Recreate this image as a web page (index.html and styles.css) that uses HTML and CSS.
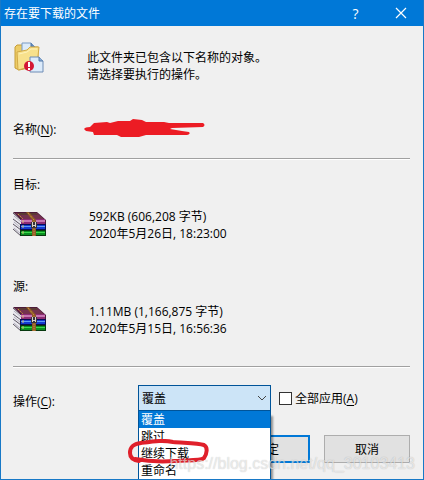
FILE: index.html
```
<!DOCTYPE html>
<html lang="zh-CN">
  <head>
    <meta charset="UTF-8" />
    <meta name="viewport" content="width=device-width, initial-scale=1.0" />
    <title>存在要下载的文件</title>
    <link rel="stylesheet" href="styles.css">
  </head>
  <body>
    <!-- shared archive icon -->
    <svg class="sprite" aria-hidden="true">
      <symbol id="archive" viewBox="0 0 33 25">
        <!-- page edges -->
        <path d="M0 1 L8 8 V24 L0 17 Z" fill="#e9e8ee" />
        <path d="M1 4 L8 10 M1 10 L8 16 M1 16 L8 22" stroke="#b4b2bd" fill="none" />
        <path d="M0 1 L8 8 M0 7 L8 13 M0 12 L8 18 M0 17 L8 24" stroke="#5a5560" fill="none" />
        <!-- books -->
        <path d="M0 0 H24 L33 8 V12 H8 V8 Z" fill="#4b1b38" />
        <path d="M2 1 H24 L31 7 H9 Z" fill="#74324f" />
        <path d="M4 1 H23 L25 3 H6 Z" fill="#5b3a35" />
        <path d="M8 7 H32 V12 H8 Z" fill="#8d2c75" />
        <path d="M8 8 H32 V10 H8 Z" fill="#c676b3" />
        <path d="M7 12 H33 V18 H7 Z" fill="#070d52" />
        <path d="M8 13 H32 V17 H8 Z" fill="#143bd0" />
        <path d="M8 14 H32 V15 H8 Z" fill="#5b9cf5" />
        <path d="M7 18 H33 V24 H7 Z" fill="#06380e" />
        <path d="M8 19 H32 V23 H8 Z" fill="#0a8f20" />
        <path d="M8 20 H32 V21 H8 Z" fill="#3bd94a" />
        <!-- titles and strap -->
        <path d="M5 2 L10 7" stroke="#c8923b" stroke-dasharray="2 1" fill="none" />
        <path d="M10 8 V11 M10 13 V16 M10 19 V22" stroke="#d8c27a" fill="none" />
        <path d="M13 0 H16 L23 8 V24 H19 V8 Z" fill="#8d5a26" />
        <path d="M15 1 L21 8 V24" stroke="#d9a24c" stroke-dasharray="1 1" fill="none" />
        <path d="M18 10 H24 V16 H18 Z" fill="#37343c" />
        <path d="M19.5 10 V15 M22.5 10 V15 M20 13.5 H22" stroke="#d8d2c8" fill="none" />
      </symbol>
    </svg>

    <div class="dialog">
      <header class="titlebar">
        <h1>存在要下载的文件</h1>
        <button class="title-button help" aria-label="帮助">?</button>
        <button class="title-button" aria-label="关闭">
          <svg width="12" height="12" viewBox="0 0 12 12"><path d="M1 1 L11 11 M11 1 L1 11" stroke="#fff" stroke-width="1.2" /></svg>
        </button>
      </header>

      <form class="content">
        <div class="row message">
          <svg class="folder-icon" width="32" height="32" viewBox="0 0 32 32">
            <path d="M2 5 L4 3 H9 L11 5 H25 V24 L6 28 L2 26 Z" fill="#edcc66" stroke="#c69d37" />
            <path d="M9 1 H18 L22 5 V14 H9 Z" fill="#dcebfa" stroke="#789bc4" />
            <path d="M18 1 V5 H22" fill="#6089bd" stroke="#5278a8" />
            <path d="M4 10 L14 8 L17 5 L26 5 L24 23 L5 28 Z" fill="#f8e18c" stroke="#d3aa47" />
            <path d="M6 12 L14 10 L18 7 L24 7" stroke="#fff3bb" fill="none" />
            <path d="M17 15 H26 L30 19 V30 H17 Z" fill="#dcebfb" stroke="#6e8cb5" />
            <path d="M26 15 V19 H30" fill="#8aaed6" stroke="#5278a8" />
            <circle cx="16" cy="24" r="5" fill="#d31736" />
            <path d="M16 20 V25 M16 26 V28" stroke="#fff" stroke-width="2" />
          </svg>
          <p>此文件夹已包含以下名称的对象。<br />请选择要执行的操作。</p>
        </div>

        <div class="row name">
          <span>名称(<u>N</u>):</span>
          <svg width="122" height="20" viewBox="0 0 122 20" role="img" aria-label="名称已遮盖">
            <path d="M0 10 Q1 8 6 8 L10 4 L23 3 L26 4 L34 2 L46 2 L49 0 L58 1 L62 3 L80 3 L85 4 L119 4 Q122 6 119 8 L88 9 L86 10 L98 12 L105 13 Q107 15 103 16 L79 16 L62 16 L55 18 L37 18 L33 16 L10 16 L9 13 L2 12 Z" fill="#ec1c24" />
          </svg>
        </div>

        <hr />

        <section class="file">
          <h2>目标:</h2>
          <div class="row">
            <svg class="archive-icon" width="33" height="25"><use href="#archive" /></svg>
            <p class="details">592KB (606,208 字节)<br />2020年5月26日, 18:23:00</p>
          </div>
        </section>

        <section class="file source">
          <h2>源:</h2>
          <div class="row">
            <svg class="archive-icon" width="33" height="25"><use href="#archive" /></svg>
            <p class="details">1.11MB (1,166,875 字节)<br />2020年5月15日, 16:56:36</p>
          </div>
        </section>

        <hr />

        <div class="action">
          <label class="action-label" for="operation">操作(<u>C</u>):</label>
          <div class="combo">
            <select id="operation">
              <option>覆盖</option>
              <option>跳过</option>
              <option>继续下载</option>
              <option>重命名</option>
            </select>
            <svg class="chevron" width="10" height="6" viewBox="0 0 10 6"><path d="M1 1 L5 5 L9 1" fill="none" stroke="#444" /></svg>
            <ul class="options">
              <li class="selected">覆盖</li>
              <li>跳过</li>
              <li>继续下载</li>
              <li>重命名</li>
            </ul>
            <svg class="mark" width="84" height="28" viewBox="0 0 84 28">
              <path d="M12 22 C5 21 3 18 3 14 C3 8 6 5 14 4 C29 2 36 1 46 3 C58 4 71 4 77 6 C81 8 80 15 77 19 C74 22 60 21 48 22 C34 23 24 23 8 20" fill="none" stroke="#e0202b" stroke-width="4" stroke-linecap="round" stroke-linejoin="round" />
            </svg>
          </div>
          <label class="apply"><input type="checkbox" />全部应用(<u>A</u>)</label>
        </div>

        <div class="buttons">
          <button type="button" class="primary">确定</button>
          <button type="button">取消</button>
        </div>
      </form>
      <span class="watermark">https://blog.csdn.net/qq_30103413</span>
    </div>
  </body>
</html>
```
FILE: styles.css
```
* {
  margin: 0;
  padding: 0;
  box-sizing: border-box;
}
body {
  font-family: "Open Sans", "Noto Sans CJK SC", sans-serif;
  font-size: 12px;
  line-height: 17px;
  color: #000;
  background-color: #f0f0f0;
}
button,
select {
  font: inherit;
  color: inherit;
}
u {
  text-underline-offset: 2px;
}
.sprite {
  position: absolute;
  width: 0;
  height: 0;
}
.dialog {
  position: relative;
  min-height: 100vh;
  overflow: hidden;
  border: 1px solid #1879c7;
  border-top: 0;
}

.titlebar {
  display: flex;
  align-items: center;
  height: 26px;
  padding-left: 3px;
  background-color: #0078d7;
  color: #fff;
}
.titlebar h1 {
  flex: 1;
  font-size: 12px;
  font-weight: 400;
}
.title-button {
  display: flex;
  align-items: center;
  justify-content: center;
  width: 45px;
  height: 26px;
  border: 0;
  background: transparent;
}
.help {
  font-size: 14px;
}

.content {
  padding: 16px 13px 0 12px;
}
.row {
  display: grid;
  grid-template-columns: 76px 1fr;
}
.message p {
  padding-top: 7px;
  margin-left: -2px;
}
.name {
  grid-template-columns: 71px 1fr;
  align-items: center;
  height: 20px;
  margin: 36px 0 19px;
}
hr {
  border: 0;
  border-top: 1px solid #a0a0a0;
  border-bottom: 1px solid #fff;
}
.file h2 {
  font-size: 12px;
  font-weight: 400;
  line-height: 17px;
  margin: 16px 0 15px;
}
.source h2 {
  margin: 36px 0 8px;
}
.archive-icon {
  margin-top: 4px;
}
.source + hr {
  margin-top: 29px;
}

.action {
  display: flex;
  margin-top: 17px;
}
.action-label {
  width: 125px;
  padding-top: 8px;
}
.combo {
  position: relative;
  width: 133px;
}
.combo select {
  display: block;
  width: 100%;
  height: 26px;
  padding-left: 3px;
  appearance: none;
  border: 1px solid #005499;
  border-radius: 0;
  background-color: #cce4f7;
}
.chevron {
  position: absolute;
  top: 10px;
  right: 4px;
}
.options {
  position: absolute;
  top: 25px;
  left: 0;
  width: 100%;
  list-style: none;
  border: 1px solid #005499;
  background-color: #fff;
  box-shadow: 2px 6px 2px rgba(0, 0, 0, 0.4);
}
.options li {
  padding-left: 2px;
  line-height: 17px;
}
.options .selected {
  background-color: #0078d7;
  color: #fff;
}
.mark {
  position: absolute;
  top: 54px;
  left: -11px;
}
.apply {
  display: flex;
  align-items: center;
  height: 26px;
  margin-left: 8px;
}
.apply input {
  width: 13px;
  height: 13px;
  margin-right: 3px;
  appearance: none;
  border: 1px solid #333;
  background-color: #fff;
}

.buttons {
  display: flex;
  justify-content: flex-end;
  gap: 14px;
  margin-top: 24px;
}
.buttons button {
  width: 86px;
  height: 28px;
  border: 1px solid #adadad;
  background-color: #e1e1e1;
}
.buttons .primary {
  border: 2px solid #0078d7;
}
.watermark {
  position: absolute;
  right: 8px;
  bottom: 5px;
  font-family: "Liberation Sans", Arial, sans-serif;
  font-size: 16px;
  line-height: 20px;
  color: rgba(255, 255, 255, 0.6);
  text-shadow: 0 0 1px rgba(0, 0, 0, 0.25);
}
```
